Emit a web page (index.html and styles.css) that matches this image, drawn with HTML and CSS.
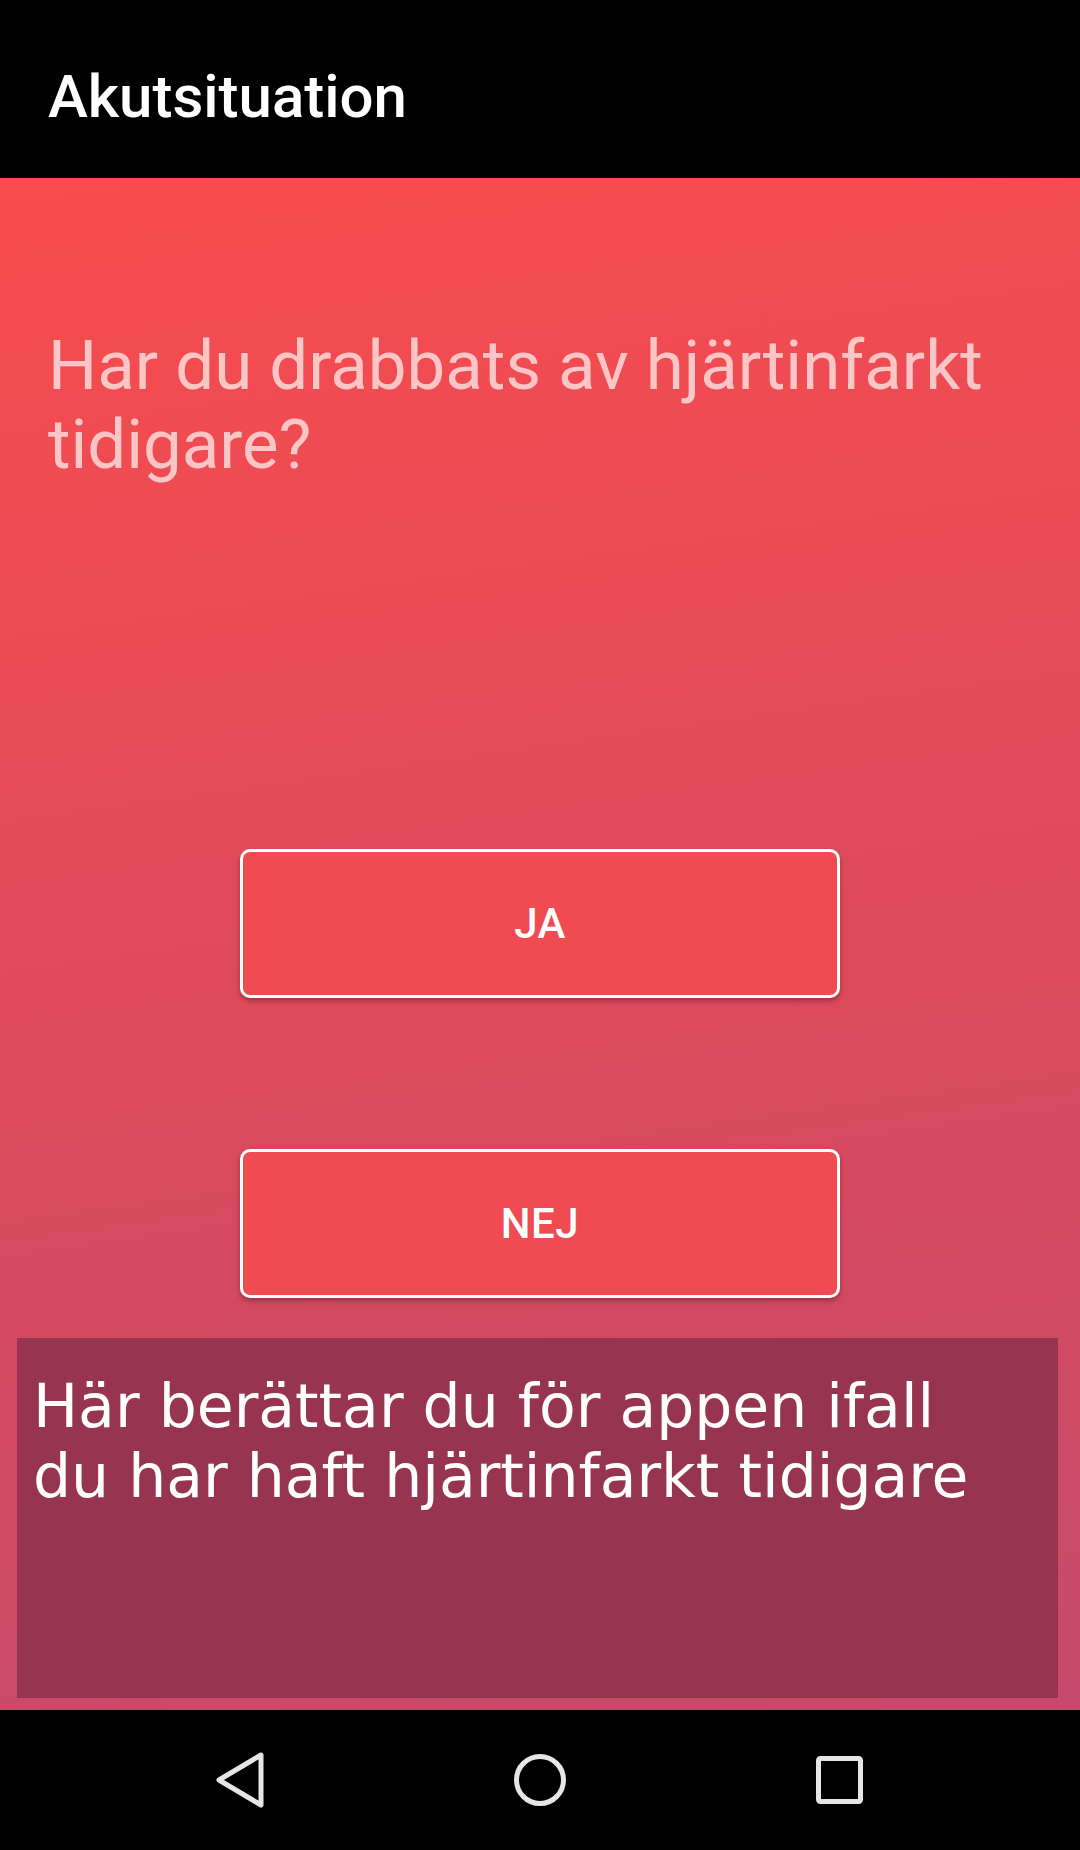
FILE: index.html
```html
<!DOCTYPE html>
<html lang="sv">
<head>
<meta charset="utf-8">
<title>Akutsituation</title>
<link rel="stylesheet" href="styles.css">
</head>
<body>
<div class="screen">
  <header class="appbar">
    <h1 class="appbar-title">Akutsituation</h1>
  </header>
  <main class="content">
    <p class="question">Har du drabbats av hjärtinfarkt tidigare?</p>
    <div class="buttons">
      <button class="answer">JA</button>
      <button class="answer">NEJ</button>
    </div>
    <div class="info">
      <p class="info-text">Här berättar du för appen ifall<br>du har haft hjärtinfarkt tidigare</p>
    </div>
  </main>
  <nav class="navbar">
    <div class="nav-item">
      <svg width="60" height="60" viewBox="0 0 60 60"><polygon points="51,5 9,30 51,55" fill="none" stroke="#e6e6e6" stroke-width="5" stroke-linejoin="round"/></svg>
    </div>
    <div class="nav-item">
      <svg width="60" height="60" viewBox="0 0 60 60"><circle cx="30" cy="30" r="23.5" fill="none" stroke="#e6e6e6" stroke-width="5"/></svg>
    </div>
    <div class="nav-item">
      <svg width="60" height="60" viewBox="0 0 60 60"><rect x="8.5" y="8.5" width="42" height="43" rx="2" fill="none" stroke="#e6e6e6" stroke-width="5"/></svg>
    </div>
  </nav>
</div>
</body>
</html>
```
FILE: styles.css
```css
html, body {
  margin: 0;
  padding: 0;
  background: #000;
}

.screen {
  width: 1080px;
  height: 1850px;
  display: flex;
  flex-direction: column;
  overflow: hidden;
}

.appbar {
  height: 178px;
  flex: 0 0 178px;
  background: #000;
  box-sizing: border-box;
  padding: 62px 0 0 48px;
}

.appbar-title {
  margin: 0;
  font-family: Roboto, "Liberation Sans", sans-serif;
  font-weight: 500;
  font-size: 60px;
  line-height: 70px;
  color: #fff;
}

.content {
  flex: 1 1 auto;
  background: linear-gradient(172deg, #f84c4d 0%, #e64b57 35%, #d44a61 70%, #c54a6b 100%);
  display: flex;
  flex-direction: column;
  box-sizing: border-box;
  padding: 148px 17px 12px 17px;
}

.question {
  margin: 0;
  padding-left: 31px;
  font-family: Roboto, "Liberation Sans", sans-serif;
  font-weight: 400;
  font-size: 69px;
  line-height: 79px;
  color: #fcc6c6;
}

.buttons {
  display: flex;
  flex-direction: column;
  align-items: center;
  gap: 151px;
  margin-top: 365px;
}

.answer {
  width: 600px;
  height: 149px;
  box-sizing: border-box;
  border: 3px solid #fff;
  border-radius: 10px;
  background: #ef4b51;
  box-shadow: 0 3px 5px rgba(60, 0, 20, 0.35);
  color: #fff;
  font-family: Roboto, "Liberation Sans", sans-serif;
  font-weight: 500;
  font-size: 42px;
  letter-spacing: 0.5px;
  padding: 0;
}

.info {
  margin-top: 40px;
  margin-right: 5px;
  height: 360px;
  background: #973550;
  box-sizing: border-box;
  padding: 33px 13px 0 16px;
}

.info-text {
  margin: 0;
  font-family: "DejaVu Sans", sans-serif;
  font-size: 60px;
  line-height: 70px;
  color: #fff;
}

.navbar {
  flex: 0 0 140px;
  height: 140px;
  background: #000;
  display: flex;
  justify-content: center;
  align-items: center;
}

.nav-item {
  width: 300px;
  display: flex;
  justify-content: center;
  align-items: center;
}
```
